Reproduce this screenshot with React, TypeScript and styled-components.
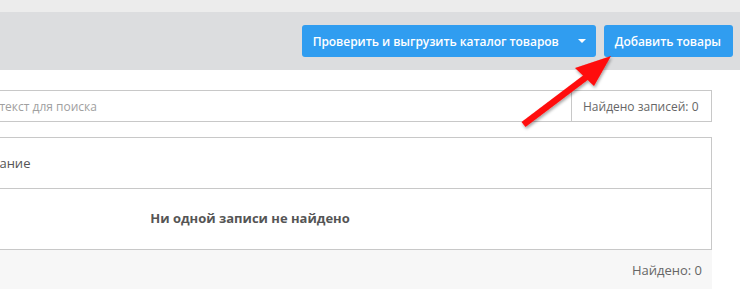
import React from 'react';
import styled, { createGlobalStyle } from 'styled-components';

const GlobalStyle = createGlobalStyle`
  html, body {
    margin: 0;
    padding: 0;
    background: #ffffff;
    font-family: "Open Sans", "Noto Sans", sans-serif;
    font-size: 13px;
    color: #555;
    overflow: hidden;
  }
`;

const Page = styled.div`
  position: relative;
  width: 740px;
  height: 305px;
  overflow: hidden;
`;

const TopStrip = styled.div`
  height: 12px;
  background: #ececec;
`;

const Toolbar = styled.div`
  height: 58px;
  background: #dcdddf;
  display: flex;
  align-items: flex-start;
  justify-content: flex-end;
  gap: 8px;
  padding: 13px 7px 0 0;
  box-sizing: border-box;
`;

const Button = styled.button<{ $wide?: boolean }>`
  height: 32px;
  display: flex;
  align-items: center;
  padding: ${p => (p.$wide ? '0 10px 0 11px' : '0 12px 0 11px')};
  border: none;
  border-radius: 3px;
  background: #309df0;
  color: #fff;
  font-family: "Open Sans", sans-serif;
  font-size: 12px;
  font-weight: 600;
  letter-spacing: -0.05px;
  cursor: pointer;
`;

const Caret = styled.span`
  width: 0;
  height: 0;
  margin: 0 0 0 19px;
  border-left: 4px solid transparent;
  border-right: 4px solid transparent;
  border-top: 4px solid #fff;
`;

const Content = styled.div`
  margin-left: -212px;
  padding: 20px 28px 0 0;
`;

const SearchGroup = styled.div`
  display: flex;
  height: 32px;
  border: 1px solid #c8c8c8;
  box-sizing: border-box;
`;

const ScopeAddon = styled.div`
  width: 148px;
  border-right: 1px solid #c8c8c8;
  flex: none;
`;

const SearchInput = styled.input`
  flex: 1;
  border: none;
  outline: none;
  padding: 0 10px;
  font-family: "Open Sans", sans-serif;
  font-size: 12px;
  color: #555;
  background: transparent;

  &::placeholder {
    color: #a0a0a0;
  }
`;

const CountAddon = styled.div`
  flex: none;
  width: 140px;
  box-sizing: border-box;
  border-left: 1px solid #c8c8c8;
  display: flex;
  align-items: center;
  padding-left: 11px;
  font-size: 12px;
  color: #666;
`;

const Table = styled.table`
  width: 100%;
  margin-top: 15px;
  border-collapse: collapse;
  border: 1px solid #c8c8c8;
`;

const HeadCell = styled.th<{ $w?: number }>`
  height: 50px;
  padding: 0 10px;
  text-align: left;
  font-weight: 400;
  font-size: 13px;
  color: #555;
  border-bottom: 1px solid #c8c8c8;
  width: ${p => (p.$w ? `${p.$w}px` : 'auto')};
`;

const EmptyCell = styled.td`
  height: 58px;
  padding: 0 0 2px;
  text-align: center;
  font-weight: 700;
  font-size: 13px;
  color: #555;
`;

const Footer = styled.div`
  height: 39px;
  background: #f7f7f7;
  display: flex;
  align-items: center;
  justify-content: flex-end;
  padding-right: 10px;
  font-size: 13px;
  color: #666;
`;

const ArrowLayer = styled.svg`
  position: absolute;
  left: 0;
  top: 0;
  pointer-events: none;
`;

const App: React.FC = () => {
  return (
    <Page>
      <GlobalStyle />
      <TopStrip />
      <Toolbar>
        <Button $wide>
          Проверить и выгрузить каталог товаров
          <Caret />
        </Button>
        <Button>Добавить товары</Button>
      </Toolbar>

      <Content>
        <SearchGroup>
          <ScopeAddon />
          <SearchInput placeholder="Введите текст для поиска" />
          <CountAddon>Найдено записей: 0</CountAddon>
        </SearchGroup>

        <Table>
          <thead>
            <tr>
              <HeadCell $w={115} />
              <HeadCell>Наименование</HeadCell>
            </tr>
          </thead>
          <tbody>
            <tr>
              <EmptyCell colSpan={2}>Ни одной записи не найдено</EmptyCell>
            </tr>
          </tbody>
        </Table>
        <Footer>Найдено: 0</Footer>
      </Content>

      <ArrowLayer width="740" height="305" viewBox="0 0 740 305">
        <defs>
          <filter id="arrowShadow" x="-20%" y="-20%" width="140%" height="140%">
            <feDropShadow dx="1" dy="2" stdDeviation="1.5" floodColor="#000" floodOpacity="0.35" />
          </filter>
        </defs>
        <g filter="url(#arrowShadow)" fill="#ff0a0a">
          <polygon points="521.5,122 525.5,127 589,79 585,74" />
          <polygon points="611,56 575,68 594,86" />
        </g>
      </ArrowLayer>
    </Page>
  );
};

export default App;
